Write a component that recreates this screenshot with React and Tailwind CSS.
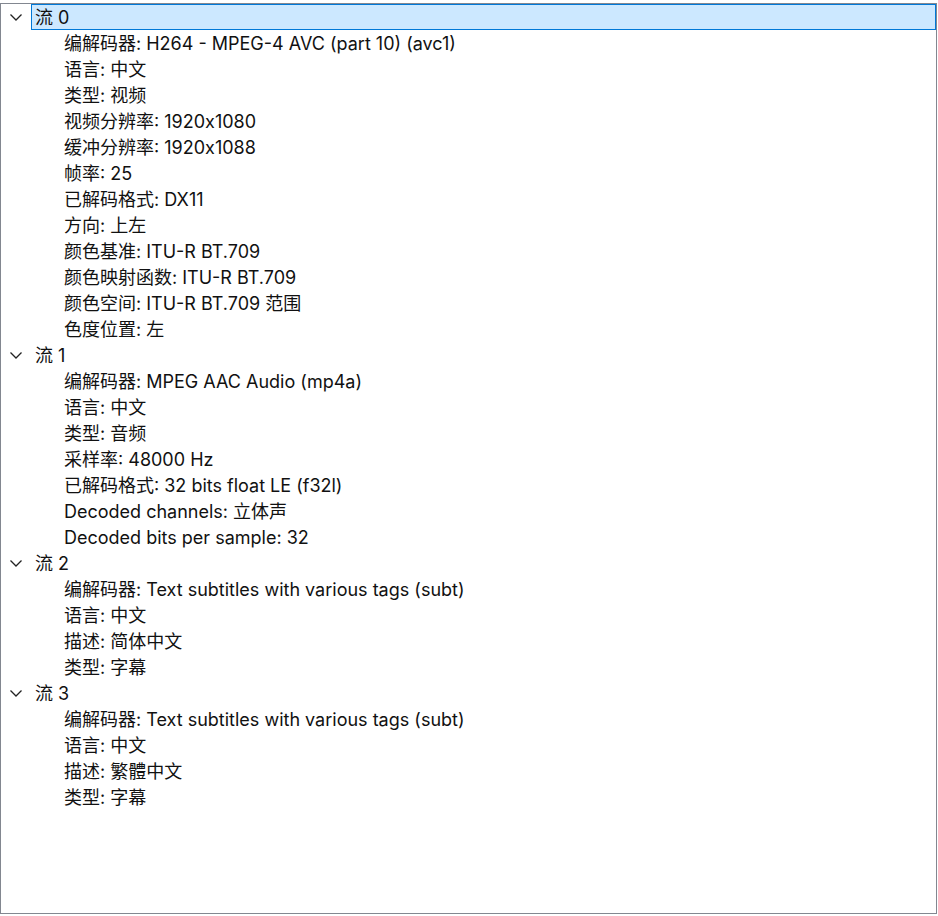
import React from 'react';

const streams = [
  {
    name: '流 0',
    items: [
      '编解码器: H264 - MPEG-4 AVC (part 10) (avc1)',
      '语言: 中文',
      '类型: 视频',
      '视频分辨率: 1920x1080',
      '缓冲分辨率: 1920x1088',
      '帧率: 25',
      '已解码格式: DX11',
      '方向: 上左',
      '颜色基准: ITU-R BT.709',
      '颜色映射函数: ITU-R BT.709',
      '颜色空间: ITU-R BT.709 范围',
      '色度位置: 左',
    ],
  },
  {
    name: '流 1',
    items: [
      '编解码器: MPEG AAC Audio (mp4a)',
      '语言: 中文',
      '类型: 音频',
      '采样率: 48000 Hz',
      '已解码格式: 32 bits float LE (f32l)',
      'Decoded channels: 立体声',
      'Decoded bits per sample: 32',
    ],
  },
  {
    name: '流 2',
    items: [
      '编解码器: Text subtitles with various tags (subt)',
      '语言: 中文',
      '描述: 简体中文',
      '类型: 字幕',
    ],
  },
  {
    name: '流 3',
    items: [
      '编解码器: Text subtitles with various tags (subt)',
      '语言: 中文',
      '描述: 繁體中文',
      '类型: 字幕',
    ],
  },
];

const Chevron = () => (
  <svg width="12" height="7" viewBox="0 0 12 7" className="shrink-0">
    <path d="M0.5 0.5 L6 6 L11.5 0.5" fill="none" stroke="#222" strokeWidth="1.3" />
  </svg>
);

export default function App() {
  return (
    <div className="w-[938px] h-[916px] bg-white pt-[3px]">
      <div
        className="w-[937px] h-[911px] border border-[#828790] bg-white overflow-hidden text-[18px] text-[#111]"
        style={{ fontFamily: 'Inter, "Noto Sans CJK SC", sans-serif' }}
      >
        {streams.map((s, i) => (
          <div key={s.name}>
            <div className="flex h-[26px] items-center">
              <div className="w-[30px] flex justify-center">
                <Chevron />
              </div>
              <div
                className={
                  'flex-1 h-[26px] flex items-center pl-[3px] pt-[2px] leading-none ' +
                  (i === 0 ? 'bg-[#cce8ff] border border-[#0078d7]' : 'border border-transparent')
                }
              >
                {s.name}
              </div>
            </div>
            {s.items.map((t, j) => (
              <div key={j} className="h-[26px] flex items-center pl-[63px] pt-[2px] leading-none whitespace-nowrap">
                {t}
              </div>
            ))}
          </div>
        ))}
      </div>
    </div>
  );
}
